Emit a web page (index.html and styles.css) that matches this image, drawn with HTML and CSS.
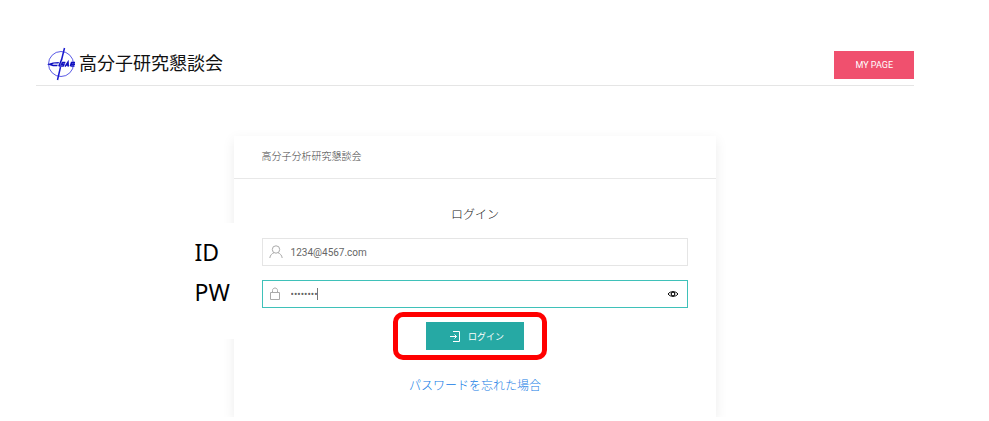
FILE: index.html
```html
<!DOCTYPE html>
<html lang="ja">

<head>
    <meta charset="UTF-8">
    <meta name="viewport" content="width=device-width, initial-scale=1.0">
    <title>ログイン</title>
    <link rel="stylesheet" href="styles.css">
</head>

<body>
    <header class="site-header">
        <a class="brand" href="#">
            <svg class="brand-logo" viewBox="0 0 28 34" aria-hidden="true">
                <circle cx="14" cy="17" r="12.5" fill="none" stroke="#5a5ae6" stroke-width="1" />
                <path d="M17.5 1 L14.5 13 M13.5 20 L10.5 33" fill="none" stroke="#1a1ad0" stroke-width="1.5" />
                <path d="M12 15 L6 15.4 L0 17.2 L6 19.2 H10.2 L10.8 17.8 H6.5 L5 17.2 L7 16.5 H11.5 Z" fill="#1010c0" />
                <path d="M14.6 12.5 L11.8 19.4 M18.4 15.4 H15.4 L14.6 17.2 H17 L16.2 19 H12.5 M18 19.6 L21 15 L21.3 19.6 M19 18 H21.3 M28 15.6 H24.5 L23.3 19.2 M24 17.2 H28 M23.5 19 H27.5" fill="none" stroke="#1010c0" stroke-width="1.5" />
            </svg>
            <span>高分子研究懇談会</span>
        </a>
        <a class="mypage-btn" href="#">MY PAGE</a>
    </header>

    <main class="login-card">
        <div class="card-header">高分子分析研究懇談会</div>

        <form class="login-form">
            <h1>ログイン</h1>

            <div class="side-labels">
                <label for="login-id">ID</label>
                <label for="login-pw">PW</label>
            </div>

            <div class="field">
                <svg class="field-icon" viewBox="0 0 14 14" aria-hidden="true">
                    <circle cx="7" cy="4.5" r="3.7" />
                    <path d="M0.8 13 C1.2 10 3 8.6 5 7.7 M9 7.7 C11 8.6 12.8 10 13.2 13" />
                </svg>
                <input type="text" id="login-id" value="1234@4567.com">
            </div>

            <div class="field field-active">
                <svg class="field-icon" viewBox="0 0 14 14" aria-hidden="true">
                    <path d="M1.5 5.5 H10.5 V12.5 H1.5 Z M3.5 5.5 V3.5 C3.5 0.2 8.5 0.2 8.5 3.5 V5.5" />
                </svg>
                <input type="password" id="login-pw" value="password">
                <span class="caret"></span>
                <button type="button" class="eye-btn" aria-label="パスワードを表示">
                    <svg viewBox="0 0 12 8" aria-hidden="true">
                        <path d="M1 4 C3.5 0.8 8.5 0.8 11 4 C8.5 7.2 3.5 7.2 1 4 Z" fill="none" stroke="#111" stroke-width="1" />
                        <circle cx="6" cy="4" r="1.8" fill="none" stroke="#111" stroke-width="1.2" />
                    </svg>
                </button>
            </div>

            <div class="submit">
                <button type="submit" class="login-btn">
                    <svg viewBox="0 0 12 12" aria-hidden="true">
                        <path d="M4 1.5 H10.5 V11.5 H4 M1 6.5 H7.5 M5.5 4.5 L7.5 6.5 L5.5 8.5" fill="none" stroke="#fff" stroke-width="1" />
                    </svg>
                    ログイン
                </button>
            </div>

            <a class="forgot" href="#">パスワードを忘れた場合</a>
        </form>
    </main>
</body>

</html>
```
FILE: styles.css
```css
* {
    margin: 0;
    padding: 0;
    box-sizing: border-box;
}

body {
    font-family: Roboto, 'Noto Sans CJK JP', sans-serif;
    background-color: #fff;
    color: #444;
    padding: 48px 75px 0 36px;
}

/* Header */
.site-header {
    display: flex;
    justify-content: space-between;
    align-items: flex-start;
    height: 38px;
    border-bottom: 1px solid #e5e5e5;
}

.brand {
    display: flex;
    align-items: center;
    gap: 4px;
    height: 32px;
    padding-left: 11px;
    color: #111;
    font-size: 18px;
    line-height: 28px;
    text-decoration: none;
}

.brand-logo {
    width: 28px;
    height: 34px;
}

.mypage-btn {
    background-color: #f0506e;
    color: #fff;
    font-size: 9px;
    line-height: 28px;
    padding: 0 21px;
    margin-top: 3px;
    text-decoration: none;
}

/* Login card */
.login-card {
    width: 55%;
    margin: 50px auto 0;
    background-color: #fff;
    box-shadow: 0 4px 12px rgba(0, 0, 0, 0.08);
    clip-path: inset(-20px -20px 0 -60px);
}

.card-header {
    height: 43px;
    padding: 0 28px;
    border-bottom: 1px solid #e8e8e8;
    font-size: 10px;
    font-weight: 300;
    line-height: 42px;
}

.login-form {
    position: relative;
    padding: 24px 28px 20px;
    text-align: center;
}

h1 {
    color: #111;
    font-size: 12px;
    font-weight: 300;
    line-height: 24px;
    margin-bottom: 11px;
}

.field {
    position: relative;
    display: flex;
    align-items: center;
    height: 28px;
    margin-bottom: 14px;
    padding: 0 6px;
    border: 1px solid #e5e5e5;
}

.field-active {
    border-color: #3fc1b9;
}

.field-icon {
    width: 14px;
    height: 14px;
    fill: none;
    stroke: #aaa;
    stroke-width: 1;
}

.field input {
    flex: 1;
    min-width: 0;
    padding-left: 8px;
    border: none;
    outline: none;
    background: none;
    color: #666;
    font-family: Roboto, sans-serif;
    font-size: 10px;
}

.caret {
    position: absolute;
    top: 7px;
    left: 54px;
    width: 1px;
    height: 12px;
    background-color: #777;
}

.eye-btn {
    display: flex;
    width: 16px;
    justify-content: center;
    border: none;
    background: none;
}

.eye-btn svg {
    width: 12px;
    height: 8px;
}

/* Large labels hanging over the left edge of the card */
.side-labels {
    position: absolute;
    top: 44px;
    right: 100%;
    display: flex;
    flex-direction: column;
    width: 50px;
    height: 116px;
    padding: 9px 0 0 11px;
    background-color: #fff;
    color: #000;
    font-family: 'Noto Sans', sans-serif;
    font-size: 23px;
    line-height: 40px;
    text-align: left;
}

.submit {
    position: relative;
    width: fit-content;
    margin: 0 auto 25px;
}

/* Red highlight around the button */
.submit::after {
    content: "";
    position: absolute;
    inset: -10px -23px -10px -33px;
    border: 5px solid #f00;
    border-radius: 10px;
    pointer-events: none;
}

.login-btn {
    display: flex;
    align-items: center;
    gap: 7px;
    height: 28px;
    padding: 0 20px 0 23px;
    border: none;
    background-color: #26a9a4;
    color: #fff;
    font-family: Roboto, 'Noto Sans CJK JP', sans-serif;
    font-size: 9px;
}

.login-btn svg {
    width: 12px;
    height: 12px;
}

.forgot {
    display: block;
    color: #0f7ae5;
    font-size: 12px;
    font-weight: 300;
    line-height: 22px;
    text-decoration: none;
}
```
